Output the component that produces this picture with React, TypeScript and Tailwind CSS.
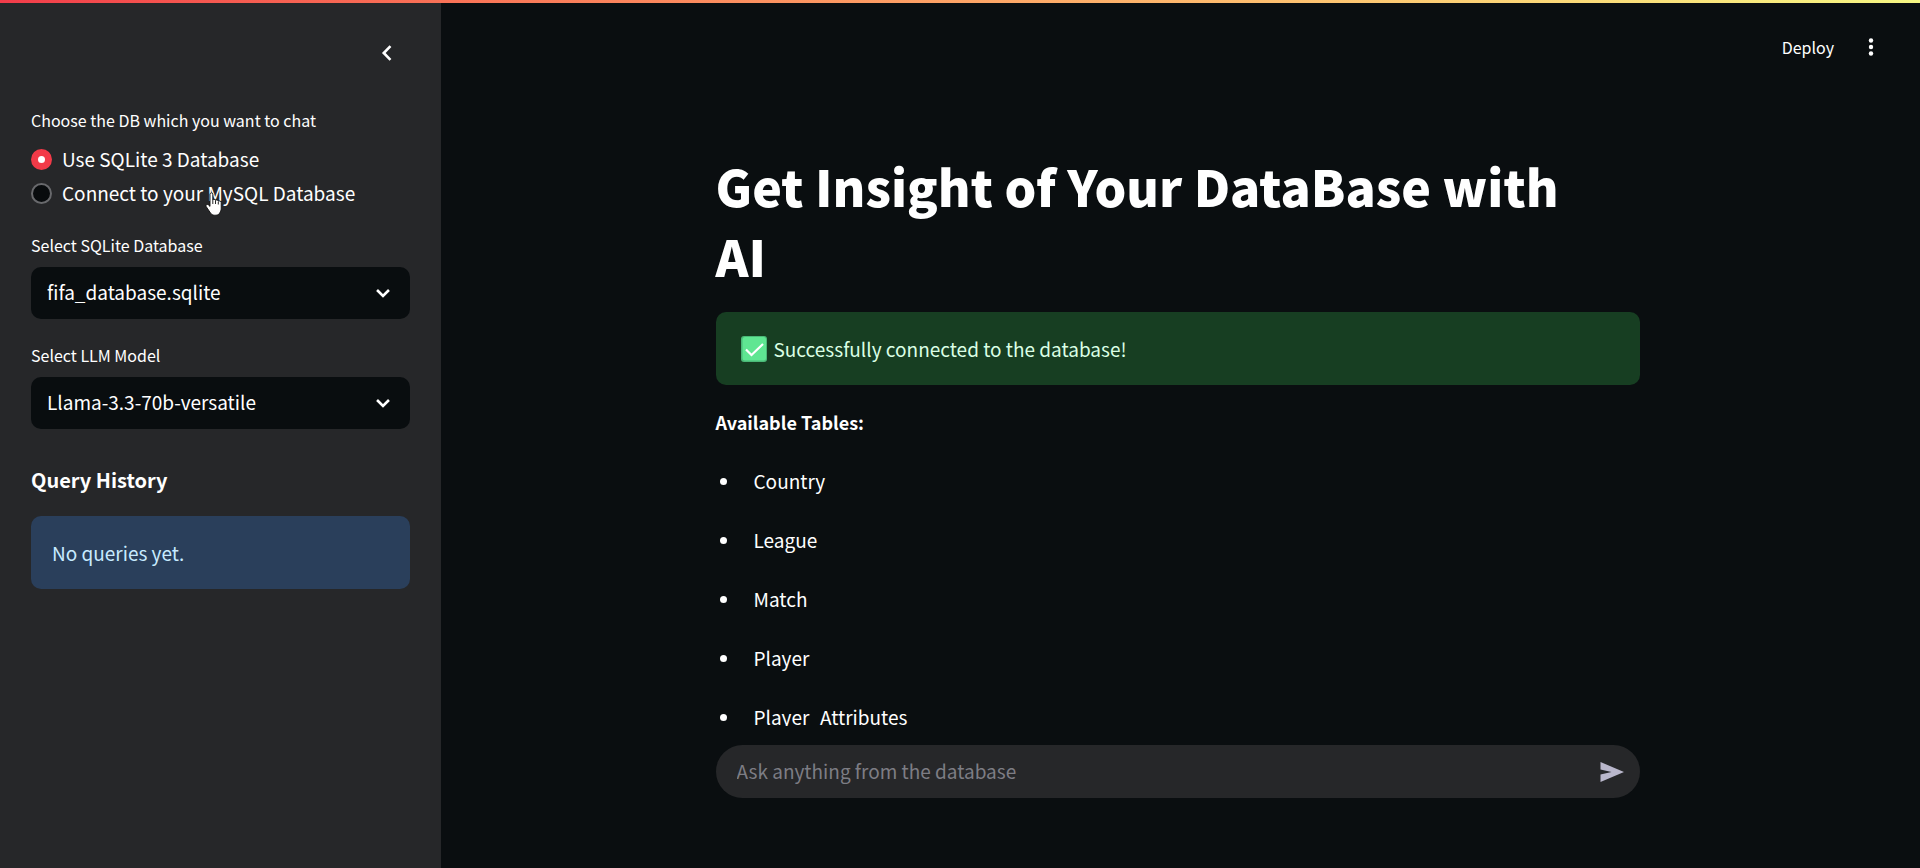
import { useState } from "react";

const tables = ["Country", "League", "Match", "Player", "Player_Attributes"];

function SelectField({ id, label, options }: { id: string; label: string; options: string[] }) {
  return (
    <div className="flex flex-col gap-1.5">
      <label htmlFor={id} className="text-[16px] leading-8">{label}</label>
      <div className="relative">
        <select
          id={id}
          className="block h-[52px] w-full appearance-none rounded-[10px] bg-[#090d0f] pr-12 pb-0.5 pl-4 text-[19px] text-white outline-none"
        >
          {options.map((o) => (
            <option key={o}>{o}</option>
          ))}
        </select>
        <svg
          viewBox="0 0 24 24"
          className="pointer-events-none absolute top-1/2 right-3.5 size-[26px] -translate-y-1/2"
          fill="none"
          stroke="currentColor"
          strokeWidth="2.4"
          aria-hidden="true"
        >
          <path d="M6.5 9.2 12 14.7 17.5 9.2" />
        </svg>
      </div>
    </div>
  );
}

function RadioOption({ label, checked, onSelect }: { label: string; checked: boolean; onSelect: () => void }) {
  return (
    <label className="flex h-[34px] items-center gap-2.5 text-[19px] leading-8">
      <input
        type="radio"
        name="db"
        checked={checked}
        onChange={onSelect}
        className="size-[21px] shrink-0 appearance-none rounded-full border-2 border-[#68696c] bg-[#080b0d] checked:border-[7px] checked:border-[#f23a48] checked:bg-white"
      />
      <span>{label}</span>
    </label>
  );
}

function HandCursor() {
  return (
    <svg viewBox="0 0 18 24" className="pointer-events-none absolute top-[189px] left-[205px] h-6 w-[18px]" aria-hidden="true">
      <path
        d="M5 2.2C5 .4 7.8 .4 7.8 2.2V8c.3-1 2.4-1 2.7.5.6-1 2.6-.7 2.8.8.8-.8 2.9-.4 2.9 1.3v5.600c0 2.400-.8 3.400-1.400 4.600-.7 1.500-2 2.400-3.900 2.400H9.300c-1.800 0-3-.9-3.800-2.200L1.200 14.600c-.9-1.600 1.100-2.900 2.400-1.600L5 14.400Z"
        fill="#fff"
        stroke="#111"
        strokeWidth=".9"
      />
      <path d="M7.800 8v4M10.500 9v3M13.300 10v2.500" stroke="#111" strokeWidth=".9" />
    </svg>
  );
}

function Sidebar() {
  const [db, setDb] = useState(0);
  return (
    <aside className="relative flex w-[441px] shrink-0 flex-col bg-[#262729] px-[31px] pt-[33px]">
      <div className="flex h-[34px] justify-end pr-1.5">
        <button type="button" aria-label="Collapse sidebar" className="flex size-[34px] items-center justify-center">
          <svg viewBox="0 0 24 24" className="size-[26px]" fill="none" stroke="currentColor" strokeWidth="2.4" aria-hidden="true">
            <path d="M15.200 5.600 9 12l6.200 6.400" />
          </svg>
        </button>
      </div>
      <fieldset className="mt-[34px]">
        <legend className="mb-1.5 text-[16px] leading-8">Choose the DB which you want to chat</legend>
        <RadioOption label="Use SQLite 3 Database" checked={db === 0} onSelect={() => setDb(0)} />
        <RadioOption label="Connect to your MySQL Database" checked={db === 1} onSelect={() => setDb(1)} />
      </fieldset>
      <div className="mt-[19px] flex flex-col gap-5">
        <SelectField id="database" label="Select SQLite Database" options={["fifa_database.sqlite"]} />
        <SelectField id="model" label="Select LLM Model" options={["Llama-3.3-70b-versatile"]} />
      </div>
      <h2 className="mt-[35px] text-[20px] leading-8 font-bold">Query History</h2>
      <div className="mt-5 rounded-[10px] bg-[#2a3f5b] px-[21px] py-5 text-[19px] leading-[33px] text-[#c7ebff]">
        No queries yet.
      </div>
      <HandCursor />
    </aside>
  );
}

function CheckBadge() {
  return (
    <svg viewBox="0 0 26 26" className="size-[26px] shrink-0" role="img" aria-label="Success">
      <rect width="26" height="26" rx="3" fill="#4bb978" />
      <rect x="1.500" y="1" width="23.500" height="23.500" rx="2.500" fill="#5fe692" />
      <path d="m5 13.500 5.500 5.500L22 8" fill="none" stroke="#fff" strokeWidth="2.200" />
    </svg>
  );
}

export default function App() {
  return (
    <div className="flex h-screen flex-col bg-[#0a0e10] font-['Noto_Sans_CJK_SC',sans-serif] text-white">
      <div className="h-[3px] shrink-0 bg-linear-to-r from-[#f23c4a] to-[#f6f783]" />
      <div className="flex min-h-0 flex-1">
        <Sidebar />
        <div className="flex min-w-0 flex-1 flex-col">
          <header className="flex h-[88px] shrink-0 items-center justify-end gap-5 pr-8">
            <button type="button" className="text-[16px] leading-8">Deploy</button>
            <button type="button" aria-label="Menu" className="flex size-[34px] items-center justify-center">
              <svg viewBox="0 0 24 24" className="size-6" fill="currentColor" aria-hidden="true">
                <circle cx="12" cy="5.500" r="2.200" />
                <circle cx="12" cy="12" r="2.200" />
                <circle cx="12" cy="18.500" r="2.200" />
              </svg>
            </button>
          </header>
          <main className="min-h-0 flex-1 overflow-y-auto pr-1.5 [scrollbar-width:none]">
            <div className="mx-auto w-full max-w-[924px] pt-[59px]">
              <h1 className="pr-12 text-[50px] leading-[70px] font-black">Get Insight of Your DataBase with AI</h1>
              <div role="status" className="mt-[22px] flex items-center gap-[7px] rounded-[10px] bg-[#173e22] px-[25px] py-5 text-[19px] leading-[33px] text-[#dbffe5]">
                <CheckBadge />
                <p>Successfully connected to the database!</p>
              </div>
              <p className="mt-[21px] text-[18px] leading-8 font-bold">Available Tables:</p>
              <ul className="mt-[27px] flex flex-col gap-[27px] text-[19px] leading-8">
                {tables.map((t) => (
                  <li key={t} className="flex items-center gap-[27px] pl-1">
                    <span className="size-[7px] rounded-full bg-white" />
                    {t}
                  </li>
                ))}
              </ul>
            </div>
          </main>
          <footer className="shrink-0 pt-[19px] pr-1.5 pb-[70px]">
            <form className="mx-auto flex h-[53px] w-full max-w-[924px] items-center rounded-full bg-[#262729] pr-3.5 pl-[21px]">
              <input
                type="text"
                aria-label="Ask anything from the database"
                placeholder="Ask anything from the database"
                className="min-w-0 flex-1 bg-transparent text-[19px] outline-none placeholder:text-[#7d7d84]"
              />
              <button type="button" aria-label="Send" className="flex size-7 items-center justify-center">
                <svg viewBox="0 0 24 20" className="h-5 w-6" fill="#b9b7cb" aria-hidden="true">
                  <path d="M.500 0 24 10 .500 20v-7.500L11.500 10 .500 7.500Z" />
                </svg>
              </button>
            </form>
          </footer>
        </div>
      </div>
    </div>
  );
}
